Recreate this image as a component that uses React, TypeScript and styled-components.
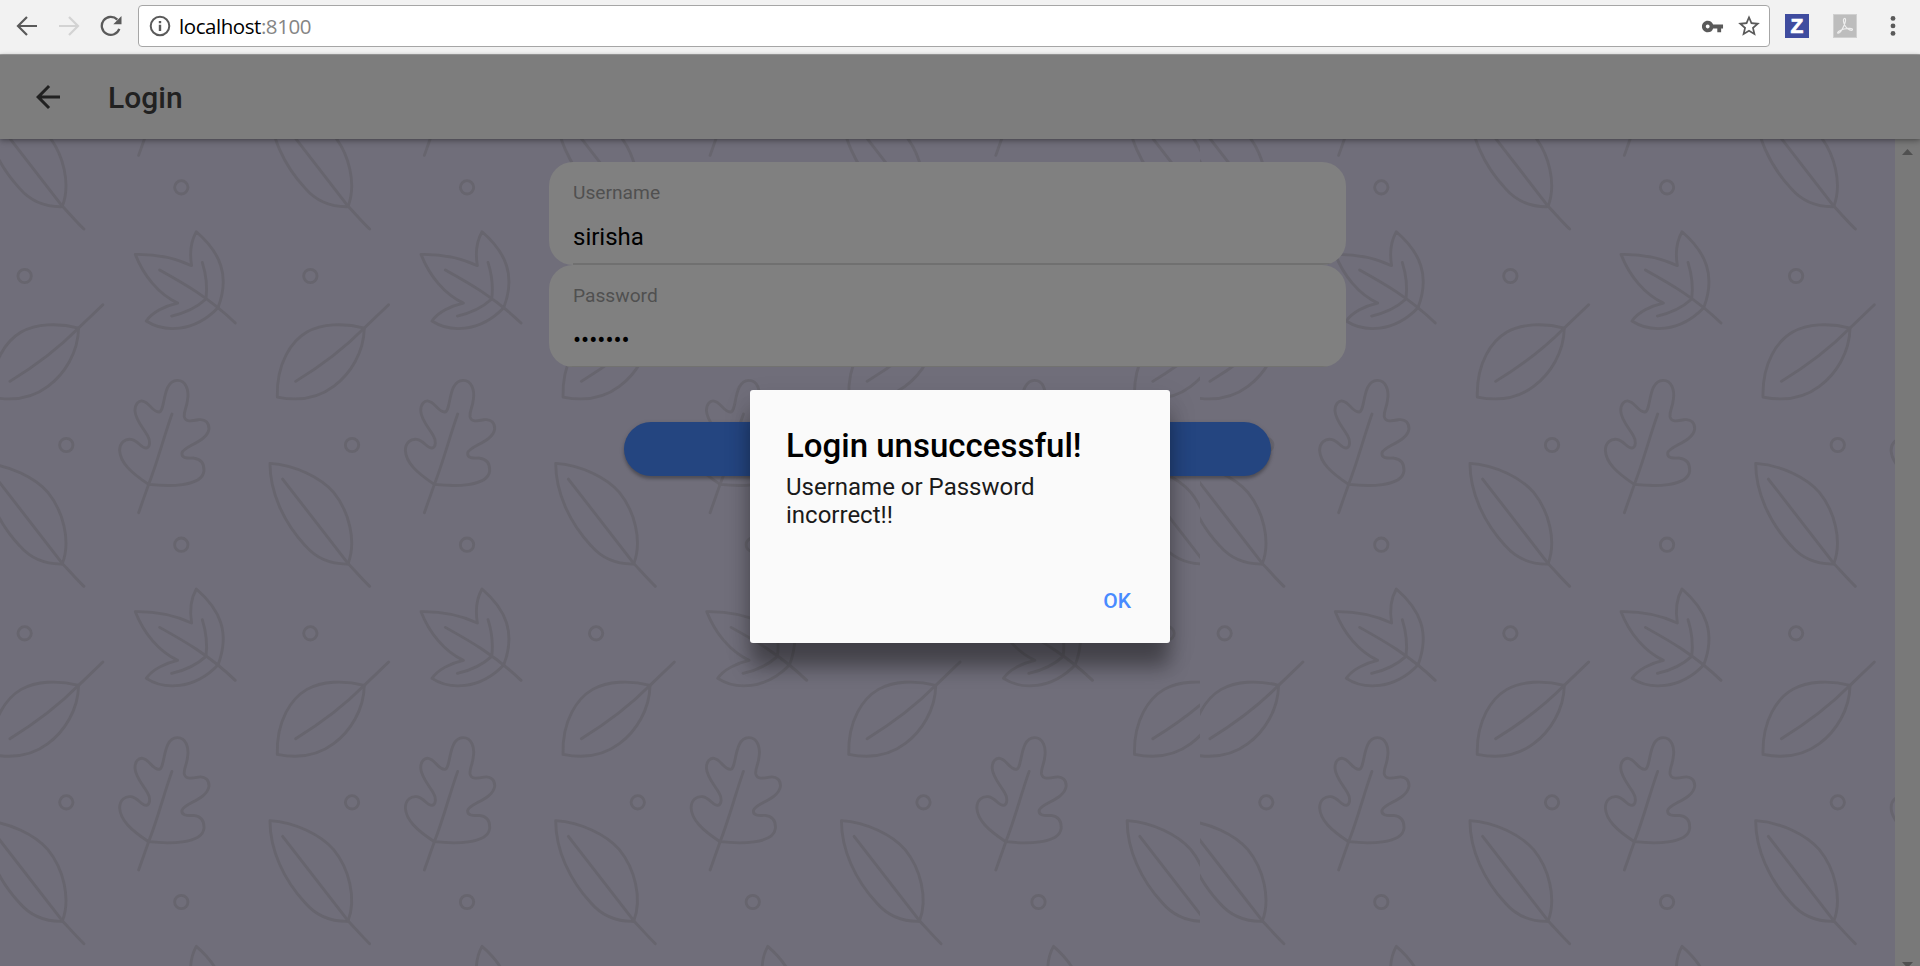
import React from "react";
import styled, { createGlobalStyle } from "styled-components";
import { MdArrowBack, MdStarBorder, MdVpnKey } from "react-icons/md";

const GlobalStyle = createGlobalStyle`
  * { box-sizing: border-box; }
  body { margin: 0; font-family: Roboto, "Liberation Sans", sans-serif; overflow: hidden; }
  button, input { font: inherit; border: 0; background: none; padding: 0; margin: 0; outline: 0; }
`;

const Window = styled.div`
  display: flex;
  flex-direction: column;
  width: 1920px;
  height: 966px;
  overflow: hidden;
`;

const BrowserBar = styled.div`
  display: flex;
  align-items: flex-start;
  flex: none;
  height: 55px;
  background: #f2f2f2;
  border-bottom: 1px solid #a8a8a8;
`;

const NavButtons = styled.div`
  display: flex;
  align-items: center;
  width: 138px;
  height: 51px;
  padding-left: 16px;
  gap: 20px;
  color: #5a5a5a;
`;

const AddressBox = styled.div`
  display: flex;
  align-items: center;
  width: 1632px;
  height: 42px;
  margin-top: 5px;
  padding: 0 7px 0 10px;
  background: #fff;
  border: 1px solid #a6a6a6;
  border-radius: 4px;
  color: #5a5a5a;
`;

const Address = styled.div`
  flex: 1;
  margin: 0 0 1px 8px;
  font: 400 20.5px/40px "Open Sans", "Noto Sans", sans-serif;
  letter-spacing: -0.44px;
  color: #000;
`;

const Port = styled.span`
  color: #858585;
`;

const StarIcon = styled(MdStarBorder)`
  margin-left: 12px;
`;

const Extensions = styled.div`
  display: flex;
  align-items: center;
  height: 52px;
  padding-left: 15px;
`;

const ZBadge = styled.div`
  width: 24px;
  height: 24px;
  margin-right: 24px;
  background: #3f4c9f;
  color: #fff;
  font: 700 21px/24px "Liberation Sans", sans-serif;
  -webkit-text-stroke: 0.7px #fff;
  text-align: center;
`;

const Page = styled.div`
  position: relative;
  display: flex;
  flex-direction: column;
  flex: 1;
  min-height: 0;
`;

const Header = styled.header`
  display: flex;
  align-items: center;
  flex: none;
  height: 84px;
  padding-left: 30px;
  background: #7d7d7d;
  color: #212121;
  z-index: 1;
  box-shadow: 0 2px 6px rgba(0, 0, 0, 0.32), 0 0 3px rgba(0, 0, 0, 0.15);
`;

const BackIcon = styled(MdArrowBack)`
  margin-top: -1px;
`;

const Title = styled.h1`
  margin: 1px 0 0 42px;
  font-size: 30px;
  font-weight: 500;
  line-height: 36px;
`;

const Content = styled.main`
  position: relative;
  display: flex;
  flex: 1;
  min-height: 0;
  background: #706e7a;
`;

const Backdrop = styled.svg`
  position: absolute;
  left: 0;
  top: 0;
`;

const Form = styled.form`
  position: relative;
  display: flex;
  flex-direction: column;
  align-items: center;
  flex: 1;
  padding-top: 23px;
`;

const Field = styled.label<{ $height: number }>`
  display: flex;
  flex-direction: column;
  width: 797px;
  height: ${(p) => p.$height}px;
  padding-left: 24px;
  border-radius: 24px;
  background: #808080;
  overflow: hidden;
`;

const FieldBody = styled.span<{ $divided?: boolean }>`
  display: flex;
  flex-direction: column;
  flex: 1;
  margin-left: ${(p) => (p.$divided ? 0 : "-24px")};
  padding-left: ${(p) => (p.$divided ? 0 : "24px")};
  border-bottom: ${(p) => (p.$divided ? "2px solid #707070" : "1px solid #727270")};
`;

const FieldLabel = styled.span`
  margin-top: 19px;
  font-size: 19.2px;
  line-height: 23px;
  color: #505050;
`;

const FieldInput = styled.input`
  height: 30px;
  margin-top: 18px;
  font-size: 24px;
  line-height: 30px;
  color: #000;
`;

const SubmitButton = styled.button`
  width: 647px;
  height: 54px;
  margin-top: 55px;
  border-radius: 27px;
  background: #244580;
  box-shadow: 0 3px 3px rgba(0, 0, 0, 0.2), 0 1.5px 5px rgba(0, 0, 0, 0.15);
`;

const Scrollbar = styled.div`
  position: relative;
  display: flex;
  flex-direction: column;
  align-items: center;
  justify-content: space-between;
  flex: none;
  width: 25px;
  height: 829px;
  padding-top: 10px;
  background: #797979;
`;

const Overlay = styled.div`
  position: absolute;
  inset: 0;
  z-index: 2;
  display: flex;
  justify-content: center;
  align-items: flex-start;
  padding-top: 335px;
`;

const Alert = styled.div`
  display: flex;
  flex-direction: column;
  width: 420px;
  height: 253px;
  padding: 36px 36px 0;
  border-radius: 3px;
  background: #fafafa;
  box-shadow: 0 25px 20px -1px rgba(0, 0, 0, 0.34), 0 12px 28px rgba(0, 0, 0, 0.15);
`;

const AlertTitle = styled.h2`
  margin: 0;
  font-size: 33px;
  font-weight: 500;
  line-height: 39px;
  color: #000;
  white-space: nowrap;
`;

const AlertMessage = styled.p`
  margin: 8px 0 0;
  font-size: 24px;
  line-height: 28px;
  color: #1a1a1a;
`;

const AlertButton = styled.button`
  align-self: flex-end;
  margin-top: 60px;
  margin-right: 3px;
  font-size: 21px;
  font-weight: 500;
  line-height: 25px;
  color: #488aff;
`;

/* One tile of foliage, drawn at three times its display size. */
const TILE_W = 857.2;
const TILE_H = 1072;
const Foliage = () => (
  <g id="foliage">
    <path d="M1109 843C1185 848 1262 886 1300 930C1345 985 1370 1075 1343 1145C1290 1146 1245 1125 1215 1090C1150 1020 1109 930 1109 843Z" />
    <path d="M1147 890L1343 1143C1370 1172 1390 1195 1408 1212" />
    <path d="M1131 644C1128 540 1175 475 1220 449C1265 424 1330 421 1392 437C1391 510 1350 575 1300 612C1250 650 1190 656 1131 644Z" />
    <path d="M1186 597C1260 552 1330 500 1392 437L1465 367" />
    <path d="M888 148C870 180 868 215 874 250C820 225 760 215 705 216C730 280 775 335 832 362C795 370 755 390 738 416C790 450 880 452 953 376C990 280 960 210 888 148Z" />
    <path d="M778 263C850 303 925 345 1005 422M906 240C920 285 921 320 917 350C890 375 855 392 814 401" />
    <path d="M745 906C690 870 660 840 658 805C658 780 675 769 692 771C715 775 722 797 738 797C750 795 751 775 742 760C728 735 705 712 704 685C704 665 715 654 727 656C748 660 755 688 776 689C796 688 785 594 831 594C858 594 866 625 862 650C860 675 850 685 852 703C856 720 875 716 895 712C915 709 927 722 926 740C920 780 850 790 845 812C843 828 860 828 880 827C905 830 912 848 911 866C905 915 800 912 745 906Z" />
    <path d="M815 695C790 765 772 838 745 906L715 991" />
    <circle cx="498" cy="788" r="20" />
    <circle cx="843" cy="1087" r="20" />
    <circle cx="373" cy="281" r="20" />
  </g>
);

const tiles = (from: number, to: number) => {
  const out: React.ReactNode[] = [];
  for (let col = from; col <= to; col++)
    for (let row = -2; row <= 1; row++)
      out.push(<use key={`${col}.${row}`} href="#foliage" x={col * TILE_W} y={row * TILE_H} />);
  return out;
};

const LeafWallpaper = () => (
  <Backdrop width="1895" height="827" viewBox="0 139 1895 827" fill="none" stroke="#67656e" strokeWidth="8.5" strokeLinecap="round" strokeLinejoin="round">
    <defs>
      <Foliage />
      <clipPath id="first"><rect x="0" y="139" width="1200" height="827" /></clipPath>
      <clipPath id="second"><rect x="1200" y="139" width="695" height="827" /></clipPath>
    </defs>
    <g clipPath="url(#first)"><g transform="translate(-99.7 539.7) scale(.33333)">{tiles(-2, 4)}</g></g>
    <g clipPath="url(#second)"><g transform="translate(1100.3 539.7) scale(.33333)">{tiles(-2, 3)}</g></g>
  </Backdrop>
);

const NavArrow = ({ forward }: { forward?: boolean }) => (
  <svg width="22" height="22" viewBox="0 0 22 22" fill="none" stroke={forward ? "#d3d3d3" : "#5a5a5a"} strokeWidth="2.2">
    <path d={forward ? "M1 11H19.5M11 2L20 11L11 20" : "M21 11H2.5M11 2L2 11L11 20"} />
  </svg>
);

const ReloadIcon = () => (
  <svg width="22" height="22" viewBox="0 0 22 22" fill="none" stroke="#5a5a5a" strokeWidth="2.3">
    <path d="M19.3 13.8A9 9 0 1 1 17.3 4.6" />
    <path d="M21.5 1V9.2H13.3Z" fill="#5a5a5a" stroke="none" />
  </svg>
);

const InfoIcon = () => (
  <svg width="22" height="22" viewBox="0 0 22 22" fill="none" stroke="#5a5a5a" strokeWidth="2">
    <circle cx="11" cy="11" r="9.3" />
    <path d="M11 9.8V16M11 6V8.3" strokeWidth="2.4" />
  </svg>
);

const PdfIcon = () => (
  <svg width="24" height="24" viewBox="0 0 24 24" fill="none">
    <rect x=".5" y=".5" width="23" height="23" fill="#bdbdbd" stroke="#d0d0d0" />
    <path d="M11.3 4.5C13.5 4 12.5 8.5 10.8 12C9 16 6.8 19.5 5 19.2C3.5 18.7 7 16 11 15C15 14 19.5 14 19.5 15.5C19.3 17.5 14.5 15.5 12.5 12.5C10.5 9.5 9.7 5 11.3 4.5Z" stroke="#eee" strokeWidth="1.2" />
  </svg>
);

const DotsIcon = styled.svg`
  margin-left: 33px;
`;

const MenuDots = () => (
  <DotsIcon width="6" height="22" viewBox="0 0 6 22" fill="#5a5a5a">
    <circle cx="3" cy="3.4" r="2.4" />
    <circle cx="3" cy="10.9" r="2.4" />
    <circle cx="3" cy="18.4" r="2.4" />
  </DotsIcon>
);

const ScrollArrow = ({ down }: { down?: boolean }) => (
  <svg width="11" height="6" viewBox="0 0 11 6" fill="#505050">
    <path d={down ? "M0 0H11L5.5 6Z" : "M0 6H11L5.5 0Z"} />
  </svg>
);

export default function App() {
  return (
    <>
      <GlobalStyle />
      <Window>
        <BrowserBar>
          <NavButtons>
            <NavArrow />
            <NavArrow forward />
            <ReloadIcon />
          </NavButtons>
          <AddressBox>
            <InfoIcon />
            <Address>localhost<Port>:8100</Port></Address>
            <MdVpnKey size={23} />
            <StarIcon size={26} />
          </AddressBox>
          <Extensions>
            <ZBadge>Z</ZBadge>
            <PdfIcon />
            <MenuDots />
          </Extensions>
        </BrowserBar>
        <Page>
          <Header>
            <BackIcon size={36} />
            <Title>Login</Title>
          </Header>
          <Content>
            <LeafWallpaper />
            <Form>
              <Field $height={103}>
                <FieldBody $divided>
                  <FieldLabel>Username</FieldLabel>
                  <FieldInput type="text" defaultValue="sirisha" />
                </FieldBody>
              </Field>
              <Field $height={102}>
                <FieldBody>
                  <FieldLabel>Password</FieldLabel>
                  <FieldInput type="password" defaultValue="1234567" />
                </FieldBody>
              </Field>
              <SubmitButton type="button" aria-label="Login" />
            </Form>
            <Scrollbar>
              <ScrollArrow />
              <ScrollArrow down />
            </Scrollbar>
          </Content>
          <Overlay>
            <Alert role="alertdialog">
              <AlertTitle>Login unsuccessful!</AlertTitle>
              <AlertMessage>Username or Password incorrect!!</AlertMessage>
              <AlertButton>OK</AlertButton>
            </Alert>
          </Overlay>
        </Page>
      </Window>
    </>
  );
}
